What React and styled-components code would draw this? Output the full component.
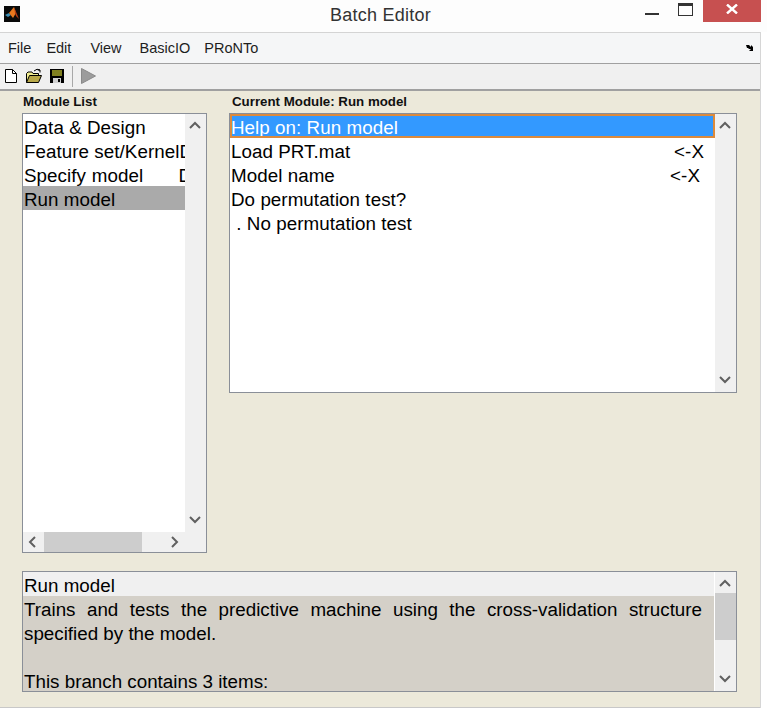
import React from 'react';
import styled, { createGlobalStyle } from 'styled-components';

const Global = createGlobalStyle`
  html, body { margin: 0; padding: 0; background: #fff; }
  body { font-family: "Liberation Sans", Arial, sans-serif; color: #000; }
`;
const Win = styled.div`
  width: 767px; height: 709px; display: flex; flex-direction: column; overflow: hidden; background: #fff;
`;
const TitleBar = styled.div`
  height: 32px; flex: none; background: #fdfdfd; display: grid; grid-template-columns: 1fr auto 1fr; align-items: center; width: 767px;
`;
const TitleLeft = styled.div` padding-left: 4px; display: flex; align-items: center; height: 32px; padding-bottom: 4px; box-sizing: border-box;`;
const TitleText = styled.div` font-size: 18px; color: #333; letter-spacing: 0.25px; padding-bottom: 2px; transform: translateX(-3px);`;
const Controls = styled.div` display: flex; justify-content: flex-end; align-self: start; padding-right: 6px; `;
const Ctl = styled.div`
  width: ${p => p.$w}px; height: 22px; display: flex; align-items: center; justify-content: center; box-sizing: border-box; padding-bottom: 4px;
  background: ${p => p.$bg || 'transparent'};
`;
const Frame = styled.div`
  flex: 1; width: 761px; box-sizing: border-box; display: flex; flex-direction: column;
  border-right: 1px solid #d6d6d6; min-height: 0; margin-bottom: 1px;
`;
const MenuBar = styled.div`
  height: 32px; flex: none; box-sizing: border-box; background: #f5f6f7; border-top: 1px solid #d4d4d4; border-bottom: 1px solid #a0a0a0;
  display: flex; align-items: center; padding: 0 6px 0 8px; font-size: 14.5px; color: #1e1e1e;
`;
const MenuItem = styled.div` margin-right: ${p => p.$mr}px; `;
const MenuEnd = styled.div` margin-left: auto; display: flex; `;
const ToolBar = styled.div`
  height: 27px; flex: none; box-sizing: border-box; background: #f0f0f0; border-bottom: 2px solid #a0a0a0;
  display: flex; align-items: center; padding: 0 0 1px 3px; gap: 6px;
`;
const ToolSep = styled.div` width: 1px; height: 21px; background: #a8a8a8; margin: 0 2px 0 1px; `;
const Body = styled.div`
  flex: 1; background: #ece9da; padding: 4px 23px 14px 22px; display: flex; flex-direction: column; min-height: 0;
  border-bottom: 1px solid #c8c8c8;
`;
const Top = styled.div` display: flex; gap: 22px; height: 458px; flex: none; `;
const LeftCol = styled.div` width: 185px; display: flex; flex-direction: column; flex: none; `;
const RightCol = styled.div` width: 508px; display: flex; flex-direction: column; flex: none; `;
const Label = styled.div`
  height: 18px; font-size: 13.3px; font-weight: bold; line-height: 13px; padding-left: ${p => p.$pl}px; color: #111; flex: none;
`;
const Box = styled.div`
  box-sizing: border-box; height: ${p => p.$h}px; width: 100%; border: 1px solid #8a8f98; background: #fff; position: relative;
  display: grid; grid-template-columns: 1fr 21px; grid-template-rows: ${p => p.$hbar ? '1fr 20px' : '1fr'}; overflow: hidden; flex: none;
`;
const Rows = styled.div` min-width: 0; overflow: hidden; `;
const Row = styled.div`
  height: 24px; line-height: 28px; font-size: 18.8px; letter-spacing: 0.05px; word-spacing: ${p => p.$ws || 0}px; white-space: pre; overflow: hidden; padding-left: 1px; box-sizing: border-box;
  display: flex; justify-content: space-between;
  background: ${p => p.$sel ? '#aaaaaa' : 'transparent'};
`;
const HelpRow = styled(Row)`
  background: #3399ff; color: #fff; outline: 2px solid #dc8a3c; outline-offset: -2px; padding-left: 1px;
`;
const Tag = styled.span` padding-right: ${p => p.$pr}px; `;
const VBar = styled.div`
  background: #f0f0f0; display: flex; flex-direction: column; justify-content: space-between; align-items: center; position: relative; padding: 7px 1px 8px 0;
`;
const Thumb = styled.div` position: absolute; left: 0; right: 0; top: 21px; height: 47px; background: #cdcdcd; `;
const HBar = styled.div`
  grid-column: 1 / span 2; background: #f0f0f0; display: flex; align-items: center; justify-content: space-between; padding: 0 27px 0 5px; position: relative;
`;
const HThumb = styled.div` position: absolute; left: 21px; top: 0; bottom: 0; width: 98px; background: #cdcdcd; `;
const Desc = styled.div` min-width: 0; overflow: hidden; background: #d4d0c8; margin-right: 1px; `;
const DescHead = styled.div` height: 24px; line-height: 27px; font-size: 18.8px; background: #f0f0f0; padding-left: 1px; `;
const DescText = styled.div` font-size: 18.8px; line-height: 24px; padding: 2px 12px 0 1px; text-align: justify; `;
const Gap = styled.div` height: 18px; flex: none; `;

const Up = () => <svg width="12" height="8" viewBox="0 0 12 8"><path d="M1 7 L6 2 L11 7" fill="none" stroke="#606060" strokeWidth="2"/></svg>;
const Down = () => <svg width="12" height="8" viewBox="0 0 12 8"><path d="M1 1 L6 6 L11 1" fill="none" stroke="#606060" strokeWidth="2"/></svg>;
const LeftA = () => <svg width="8" height="12" viewBox="0 0 8 12"><path d="M7 1 L2 6 L7 11" fill="none" stroke="#606060" strokeWidth="2"/></svg>;
const RightA = () => <svg width="8" height="12" viewBox="0 0 8 12"><path d="M1 1 L6 6 L1 11" fill="none" stroke="#606060" strokeWidth="2"/></svg>;

const Logo = () => (
  <svg width="16" height="16" viewBox="0 0 16 16">
    <rect width="16" height="16" fill="#0a0a0a"/>
    <path d="M1 9 L5 7 L7 9 L4 11Z" fill="#3f8fb5"/>
    <path d="M5 7 L10 1 L12 7 L9 12 Z" fill="#e8781e"/>
    <path d="M10 1 L15 13 L12 10 L11 7Z" fill="#b83a12"/>
  </svg>
);
const NewIcon = () => (
  <svg width="16" height="16" viewBox="0 0 16 16"><path d="M2.5 1.5 H9.5 L13.5 5.5 V14.5 H2.5Z" fill="#fff" stroke="#000"/><path d="M9.5 1.5 V5.5 H13.5" fill="none" stroke="#000"/></svg>
);
const OpenIcon = () => (
  <svg width="18" height="16" viewBox="0 0 18 16">
    <path d="M1.5 14.5 V5.5 L3 4 H7 L8 5.5 H13.5 V7" fill="#f0ec90" stroke="#000"/>
    <path d="M1.5 14.5 L4.5 7.5 H16.5 L13.5 14.5Z" fill="#b8a848" stroke="#000"/>
    <path d="M9 3 Q12 0 15 2 M15 2 L15 4.5 M15 2 L12.8 2" fill="none" stroke="#000"/>
  </svg>
);
const SaveIcon = () => (
  <svg width="16" height="16" viewBox="0 0 16 16">
    <rect x="1" y="1" width="14" height="14" fill="#000"/>
    <rect x="3" y="2" width="10" height="6" fill="#808020"/>
    <rect x="4" y="10" width="8" height="5" fill="#d0d0d0"/>
    <rect x="9" y="11" width="2" height="3" fill="#000"/>
  </svg>
);
const PlayIcon = () => (
  <svg width="15" height="16" viewBox="0 0 15 16"><path d="M0.5 0.5 L14.5 8 L0.5 15.5Z" fill="#9c9c9c" stroke="#8a8a8a"/></svg>
);

export default function App() {
  return (
    <Win>
      <Global />
      <TitleBar>
        <TitleLeft><Logo /></TitleLeft>
        <TitleText>Batch Editor</TitleText>
        <Controls>
          <Ctl $w={32}><svg width="14" height="14" viewBox="0 0 14 14"><rect x="0" y="11" width="14" height="2" fill="#333"/></svg></Ctl>
          <Ctl $w={35}><svg width="16" height="13" viewBox="0 0 16 13"><rect x="0.5" y="0.5" width="14" height="12" fill="none" stroke="#333"/><rect x="0" y="0" width="15" height="3" fill="#333"/></svg></Ctl>
          <Ctl $w={58} $bg="#c75050"><svg width="12" height="10" viewBox="0 0 12 10"><path d="M1 0.5 L11 9.5 M11 0.5 L1 9.5" stroke="#fff" strokeWidth="2.4"/></svg></Ctl>
        </Controls>
      </TitleBar>
      <Frame>
        <MenuBar>
          <MenuItem $mr={15}>File</MenuItem>
          <MenuItem $mr={19}>Edit</MenuItem>
          <MenuItem $mr={18}>View</MenuItem>
          <MenuItem $mr={14}>BasicIO</MenuItem>
          <MenuItem $mr={0}>PRoNTo</MenuItem>
          <MenuEnd>
            <svg width="8" height="7" viewBox="0 0 8 7"><path d="M0 0 H3 L5 2 V0 L7 2 V6 H3 L5 4 H2 L3 3 H1Z" fill="#000"/></svg>
          </MenuEnd>
        </MenuBar>
        <ToolBar>
          <NewIcon /><OpenIcon /><SaveIcon />
          <ToolSep />
          <PlayIcon />
        </ToolBar>
        <Body>
          <Top>
            <LeftCol>
              <Label $pl={1}>Module List</Label>
              <Box $h={440} $hbar>
                <Rows>
                  <Row>Data &amp; Design</Row>
                  <Row>Feature set/KernelD</Row>
                  <Row $ws={0.6}>{'Specify model      D'}</Row>
                  <Row $sel>Run model</Row>
                </Rows>
                <VBar><Up /><Down /></VBar>
                <HBar><HThumb /><LeftA /><RightA /></HBar>
              </Box>
            </LeftCol>
            <RightCol>
              <Label $pl={3}>Current Module: Run model</Label>
              <Box $h={280}>
                <Rows>
                  <HelpRow>Help on: Run model</HelpRow>
                  <Row>Load PRT.mat<Tag $pr={11}>&lt;-X</Tag></Row>
                  <Row>Model name<Tag $pr={15}>&lt;-X</Tag></Row>
                  <Row>Do permutation test?</Row>
                  <Row>{' . No permutation test'}</Row>
                </Rows>
                <VBar><Up /><Down /></VBar>
              </Box>
            </RightCol>
          </Top>
          <Gap />
          <Box $h={121}>
            <Desc>
              <DescHead>Run model</DescHead>
              <DescText>
                Trains and tests the predictive machine using the cross-validation structure specified by the model.
                <br /><br />
                This branch contains 3 items:
              </DescText>
            </Desc>
            <VBar><Up /><Thumb /><Down /></VBar>
          </Box>
        </Body>
      </Frame>
    </Win>
  );
}
